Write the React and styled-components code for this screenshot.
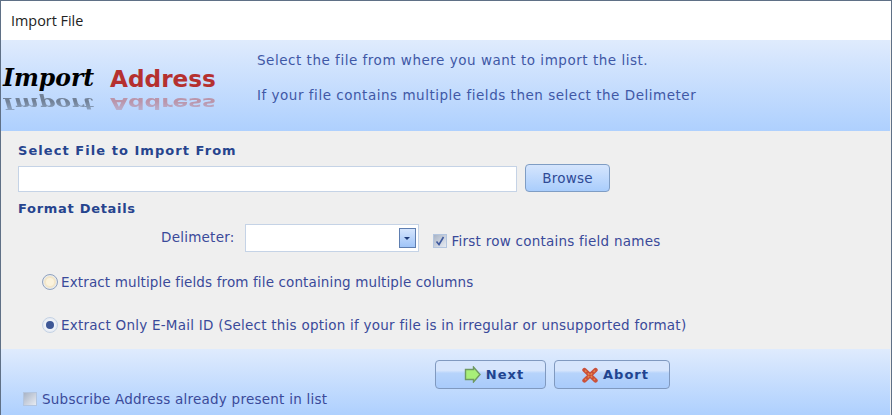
import React from "react";
import styled, { createGlobalStyle } from "styled-components";

const GlobalStyle = createGlobalStyle`
  html, body { margin: 0; padding: 0; background: #fff; }
  * { box-sizing: border-box; }
`;

const Window = styled.div`
  width: 892px;
  height: 415px;
  border: 1px solid #5f7086;
  border-bottom: 0;
  display: flex;
  flex-direction: column;
  font-family: "DejaVu Sans", Verdana, sans-serif;
  font-size: 13.5px;
  letter-spacing: 0.24px;
  color: #3a4a9a;
  background: #efefef;
  overflow: hidden;
`;

const TitleBar = styled.div`
  height: 39px;
  padding: 0 10px;
  display: flex;
  align-items: center;
  background: #fff;
  color: #222;
  font-family: "Open Sans", sans-serif;
  font-size: 14.4px;
  letter-spacing: 0;
`;

const Header = styled.div`
  height: 91px;
  display: flex;
  margin-right: 1px;
  background: linear-gradient(#dfebfd, #aed0fe);
`;

const Logo = styled.div`
  width: 256px;
  padding: 24px 0 0 2px;
  flex-shrink: 0;
  letter-spacing: 0;
`;

const LogoLine = styled.div`
  display: flex;
  height: 29px;
  align-items: center;
  font-weight: bold;
  line-height: 29px;
  white-space: nowrap;
  ${(p) => p.$flip && `
    transform: scaleY(-0.67);
    transform-origin: top;
    margin-top: 20px;
    opacity: 0.4;
    filter: blur(0.5px);
    -webkit-mask-image: linear-gradient(to bottom, rgba(0, 0, 0, 0.45), #000 60%);
    mask-image: linear-gradient(to bottom, rgba(0, 0, 0, 0.45), #000 60%);
  `}
`;

const LogoImport = styled.span`
  font-family: "DejaVu Serif", serif;
  font-size: 23.5px;
  font-style: italic;
  color: #000;
  width: 107px;
`;

const LogoAddress = styled.span`
  color: #b5302f;
  font-size: 23.2px;
  font-family: "DejaVu Sans", sans-serif;
`;

const HeaderText = styled.div`
  padding-top: 11px;
  display: flex;
  flex-direction: column;
  gap: 17px;
  line-height: 18px;
  color: #3f58a6;
  letter-spacing: 0.52px;
`;

const Body = styled.div`
  height: 218px;
  padding: 11px 0 0 17px;
  display: flex;
  flex-direction: column;
`;

const SectionTitle = styled.div`
  font-weight: bold;
  font-size: 13px;
  letter-spacing: ${(p) => p.$spacing}px;
  line-height: 18px;
  color: #26448e;
  margin-top: ${(p) => p.$top || 0}px;
`;

const FileRow = styled.div`
  display: flex;
  align-items: flex-end;
  gap: 8px;
  height: 28px;
  margin-top: 4px;
`;

const FileInput = styled.div`
  width: 499px;
  height: 26px;
  background: #fff;
  border: 1px solid #c5d3e6;
`;

const BrowseButton = styled.div`
  width: 85px;
  height: 28px;
  display: flex;
  align-items: center;
  justify-content: center;
  border: 1px solid #7f9dc4;
  border-radius: 4px;
  background: linear-gradient(#d5e5fd, #a9cdfc);
  color: #2f4a96;
`;

const DelimiterRow = styled.div`
  display: flex;
  align-items: center;
  height: 28px;
  margin-top: 6px;
  padding-left: 143px;
`;

const Label = styled.span`
  white-space: nowrap;
`;

const DelimiterLabel = styled(Label)`
  margin-bottom: 2px;
`;

const Select = styled.div`
  width: 174px;
  height: 28px;
  margin-left: 10px;
  padding: 3px 2px 3px 0;
  display: flex;
  justify-content: flex-end;
  background: #fff;
  border: 1px solid #c5d3e6;
`;

const SelectArrow = styled.div`
  width: 17px;
  display: flex;
  align-items: center;
  justify-content: center;
  border: 1px solid #5e7eb0;
  background: linear-gradient(#d5e5fd, #9fc4f8);
  &::after {
    content: "";
    border-left: 3px solid transparent;
    border-right: 3px solid transparent;
    border-top: 3px solid #1e3a78;
  }
`;

const CheckBox = styled.span`
  width: 14px;
  height: 14px;
  flex-shrink: 0;
  border: 1px solid #b3c5df;
  background: linear-gradient(135deg, #a9b4c6, #e7ebf2);
  display: flex;
  align-items: center;
  justify-content: center;
`;

const CheckRow = styled.div`
  display: flex;
  align-items: center;
  gap: ${(p) => p.$gap}px;
  margin-left: ${(p) => p.$left || 0}px;
  margin-top: ${(p) => p.$top || 0}px;
`;

const RadioRow = styled.div`
  display: flex;
  align-items: center;
  height: 20px;
  gap: 3px;
  padding-left: 24px;
  margin-top: ${(p) => p.$top}px;
  white-space: nowrap;
  letter-spacing: ${(p) => p.$spacing}px;
`;

const Radio = styled.span`
  width: 16px;
  height: 16px;
  border-radius: 50%;
  border: 1px solid ${(p) => (p.$checked ? "#c4d2e4" : "#8fa3c2")};
  box-shadow: inset 0 0 0 1px #e6ebf3;
  background: ${(p) => (p.$checked ? "#eef2f8" : "#f3e6c8")};
  display: flex;
  align-items: center;
  justify-content: center;
  &::after {
    content: "";
    width: 8px;
    height: 8px;
    border-radius: 50%;
    background: ${(p) => (p.$checked ? "#3d5796" : "#fbf3dd")};
  }
`;

const Footer = styled.div`
  flex: 1;
  margin-right: 1px;
  padding: 11px 0 0 22px;
  display: flex;
  flex-direction: column;
  background: linear-gradient(#dfebfd, #aed0fe);
`;

const ButtonRow = styled.div`
  display: flex;
  gap: 8px;
  padding-left: 412px;
`;

const ActionButton = styled.div`
  width: ${(p) => p.$width}px;
  height: 29px;
  padding-left: 7px;
  display: flex;
  align-items: center;
  justify-content: center;
  gap: 5px;
  border: 1px solid #8099bf;
  border-radius: 4px;
  background: linear-gradient(#d6e5fc 0, #d6e5fc 35%, #b6d3fb 45%, #a9cbfb 100%);
  color: #21448f;
  font-weight: bold;
  font-size: 13px;
  letter-spacing: 1px;
`;

const NextIcon = () => (
  <svg width="17" height="17" viewBox="0 0 17 17">
    <path d="M1.5 3.5H9.5V1L16 8.5L9.5 16V13.5H1.5Z" fill="#a8ef78" stroke="#6f9a62" strokeWidth="1.4" />
  </svg>
);

const AbortIcon = () => (
  <svg width="16" height="16" viewBox="0 0 16 16">
    <path d="M2.5 3L13.5 13.5M13.5 3L2.5 13.5" stroke="#c9503a" strokeWidth="4.4" strokeLinecap="round" />
    <path d="M3 3.5L13 13M13 3.5L3 13" stroke="#e8894a" strokeWidth="1.4" strokeDasharray="2 2" />
  </svg>
);

const CheckMark = () => (
  <svg width="10" height="10" viewBox="0 0 10 10">
    <path d="M1.5 5.5L4 8.5L8.5 1" fill="none" stroke="#3f5a9e" strokeWidth="1.6" />
  </svg>
);

const LogoText = ({ flip }) => (
  <LogoLine $flip={flip} aria-hidden={flip}>
    <LogoImport>Import</LogoImport>
    <LogoAddress>Address</LogoAddress>
  </LogoLine>
);

const App = () => (
  <>
    <GlobalStyle />
    <Window>
      <TitleBar>Import File</TitleBar>
      <Header>
        <Logo>
          <LogoText />
          <LogoText flip />
        </Logo>
        <HeaderText>
          <div>Select the file from where you want to import the list.</div>
          <div>If your file contains multiple fields then select the Delimeter</div>
        </HeaderText>
      </Header>
      <Body>
        <SectionTitle $spacing={1.05}>Select File to Import From</SectionTitle>
        <FileRow>
          <FileInput />
          <BrowseButton>Browse</BrowseButton>
        </FileRow>
        <SectionTitle $top={8} $spacing={0.7}>Format Details</SectionTitle>
        <DelimiterRow>
          <DelimiterLabel>Delimeter:</DelimiterLabel>
          <Select>
            <SelectArrow />
          </Select>
          <CheckRow $gap={5} $left={14} $top={5}>
            <CheckBox>
              <CheckMark />
            </CheckBox>
            <Label>First row contains field names</Label>
          </CheckRow>
        </DelimiterRow>
        <RadioRow $top={20} $spacing={0.13}>
          <Radio />
          <Label>Extract multiple fields from file containing multiple columns</Label>
        </RadioRow>
        <RadioRow $top={23} $spacing={0.24}>
          <Radio $checked />
          <Label>Extract Only E-Mail ID (Select this option if your file is in irregular or unsupported format)</Label>
        </RadioRow>
      </Body>
      <Footer>
        <ButtonRow>
          <ActionButton $width={111}>
            <NextIcon />
            Next
          </ActionButton>
          <ActionButton $width={116}>
            <AbortIcon />
            Abort
          </ActionButton>
        </ButtonRow>
        <CheckRow $gap={5} $top={2}>
          <CheckBox />
          <Label>Subscribe Address already present in list</Label>
        </CheckRow>
      </Footer>
    </Window>
  </>
);

export default App;
